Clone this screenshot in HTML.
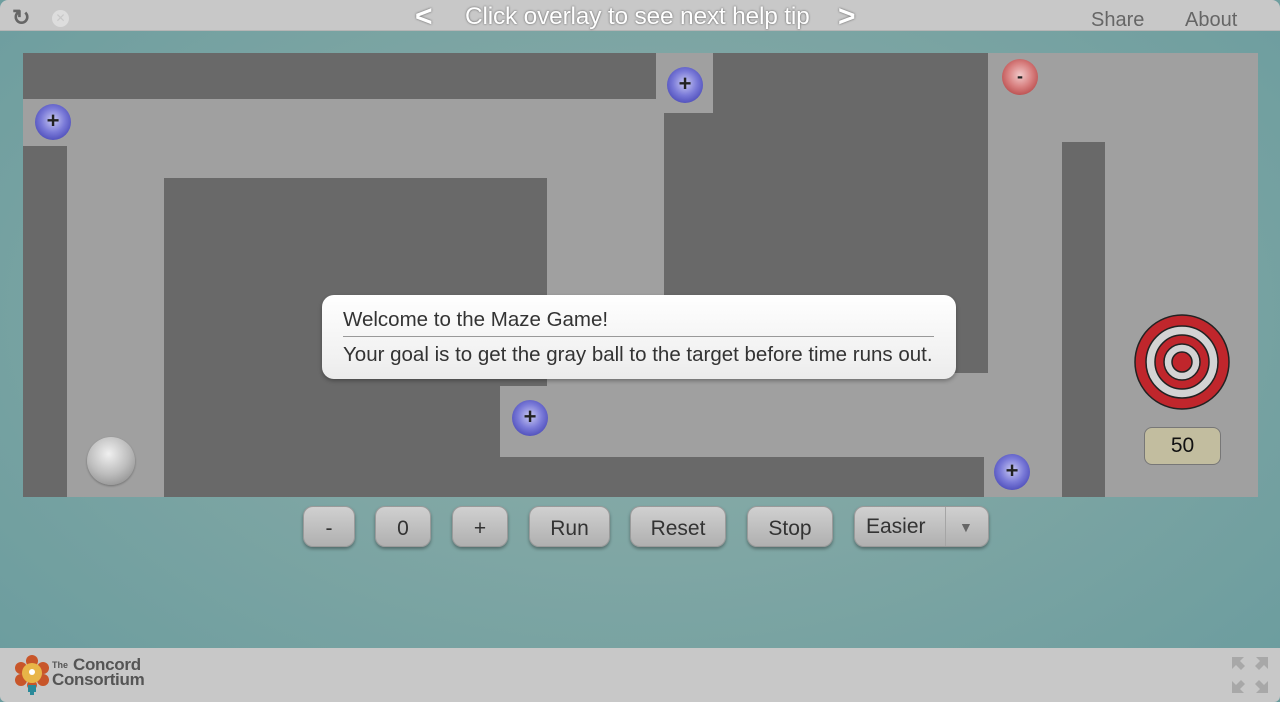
<!DOCTYPE html>
<html><head><meta charset="utf-8"><style>
*{margin:0;padding:0;box-sizing:border-box}
body{width:1280px;height:702px;overflow:hidden;font-family:"Liberation Sans",sans-serif;background:radial-gradient(ellipse at 50% 45%,#8cafaa 0%,#7fa6a4 45%,#6a9c9e 100%);position:relative}
.top{position:absolute;left:0;top:0;width:1280px;height:31px;background:#c8c8c8;border-radius:8px 8px 0 0;border-bottom:1px solid #b5b5b5}
.foot{position:absolute;left:0;top:648px;width:1280px;height:54px;background:#c8c8c8;border-radius:0 0 6px 6px}
.r{position:absolute}
.maze{position:absolute;left:23px;top:53px;width:1235px;height:444px;background:#a0a0a0;overflow:hidden}
.d{position:absolute;background:#696969}
.ball{position:absolute;width:36px;height:36px;border-radius:50%;background:radial-gradient(circle at 50% 45%,#c9c9f2 0%,#7a7ad8 45%,#4b4bb8 80%,#6a6acc 100%);color:#222;font:bold 22px/34px "Liberation Sans",sans-serif;text-align:center}
.red{background:radial-gradient(circle at 50% 45%,#f1c9c9 0%,#d88080 45%,#b84b4b 80%,#cc6a6a 100%)}
.btn{position:absolute;top:506px;height:41px;border-radius:10px;background:linear-gradient(#d0d0d0,#b0b0b0);box-shadow:0 2px 3px rgba(0,0,0,.35);border:1px solid #9a9a9a;font-size:21px;color:#333;text-align:center;line-height:44px}
</style></head><body>
<div class="top">
 <div class="r" style="left:12px;top:5px;font-size:22px;color:#666;font-weight:bold">&#x21bb;</div>
 <div class="r" style="left:52px;top:10px;width:17px;height:17px;border-radius:50%;background:#ddd;color:#c8c8c8;font-size:12px;line-height:17px;text-align:center">&#x2715;</div>
 <div class="r" style="left:415px;top:0px;font-size:30px;color:#fff;text-shadow:0 0 2px #555;font-weight:bold">&lt;</div>
 <div class="r" style="left:465px;top:3px;font-size:24.5px;color:#fff;text-shadow:0 0 2px #555;letter-spacing:-0.2px;white-space:nowrap">Click overlay to see next help tip</div>
 <div class="r" style="left:838px;top:0px;font-size:30px;color:#fff;text-shadow:0 0 2px #555;font-weight:bold">&gt;</div>
 <div class="r" style="left:1091px;top:9px;font-size:20px;color:#666">Share</div>
 <div class="r" style="left:1185px;top:9px;font-size:20px;color:#666">About</div>
</div>
<div class="maze">
 <div class="d" style="left:0;top:0;width:633px;height:46px"></div>
 <div class="d" style="left:0;top:93px;width:44px;height:351px"></div>
 <div class="d" style="left:141px;top:125px;width:383px;height:208px"></div>
 <div class="d" style="left:141px;top:333px;width:336px;height:111px"></div>
 <div class="d" style="left:477px;top:404px;width:484px;height:40px"></div>
 <div class="d" style="left:641px;top:60px;width:50px;height:260px"></div>
 <div class="d" style="left:690px;top:0;width:275px;height:320px"></div>
 <div class="d" style="left:1039px;top:89px;width:43px;height:355px"></div>
</div>
<div class="ball" style="left:667px;top:67px">+</div>
<div class="ball" style="left:35px;top:104px">+</div>
<div class="ball" style="left:512px;top:400px">+</div>
<div class="ball" style="left:994px;top:454px">+</div>
<div class="ball red" style="left:1002px;top:59px;font-size:18px">-</div>
<div class="r" style="left:87px;top:437px;width:48px;height:48px;border-radius:50%;background:radial-gradient(circle at 45% 35%,#f0f0f0 0%,#bdbdbd 50%,#8a8a8a 90%);box-shadow:0 1px 2px rgba(0,0,0,.3)"></div>
<svg class="r" style="left:1133px;top:313px" width="98" height="98" viewBox="0 0 98 98">
 <circle cx="49" cy="49" r="47" fill="#c0262c" stroke="#222" stroke-width="1.5"/>
 <circle cx="49" cy="49" r="36" fill="#d3d3d3" stroke="#222" stroke-width="1.5"/>
 <circle cx="49" cy="49" r="27" fill="#c0262c" stroke="#222" stroke-width="1.5"/>
 <circle cx="49" cy="49" r="18" fill="#d3d3d3" stroke="#222" stroke-width="1.5"/>
 <circle cx="49" cy="49" r="10" fill="#c0262c" stroke="#222" stroke-width="1.5"/>
</svg>
<div class="r" style="left:1144px;top:427px;width:77px;height:38px;border-radius:8px;background:#c2bd9f;border:1px solid #777;font-size:21px;line-height:36px;text-align:center;color:#111">50</div>
<div class="r" style="left:322px;top:295px;width:634px;height:84px;border-radius:12px;background:linear-gradient(#fff,#ececec);box-shadow:0 2px 4px rgba(0,0,0,.3)">
 <div class="r" style="left:21px;top:13px;font-size:20.5px;color:#333">Welcome to the Maze Game!</div>
 <div class="r" style="left:21px;top:41px;width:591px;height:1px;background:#999"></div>
 <div class="r" style="left:21px;top:48px;font-size:20.5px;color:#333;letter-spacing:0;white-space:nowrap">Your goal is to get the gray ball to the target before time runs out.</div>
</div>
<div class="btn" style="left:303px;width:52px">-</div>
<div class="btn" style="left:375px;width:56px">0</div>
<div class="btn" style="left:452px;width:56px">+</div>
<div class="btn" style="left:529px;width:81px">Run</div>
<div class="btn" style="left:630px;width:96px">Reset</div>
<div class="btn" style="left:747px;width:86px">Stop</div>
<div class="btn" style="left:854px;width:135px;text-align:left;padding-left:11px;line-height:40px">Easier<span class="r" style="left:90px;top:0;width:1px;height:39px;background:#a5a5a5"></span><span class="r" style="left:104px;top:0;font-size:14px;color:#666">&#9660;</span></div>
<div class="foot">
 <svg class="r" style="left:12px;top:5px" width="40" height="44" viewBox="0 0 40 44">
  <g fill="#c8562a"><circle cx="20" cy="8" r="6"/><circle cx="31" cy="15" r="6"/><circle cx="31" cy="27" r="6"/><circle cx="9" cy="15" r="6"/><circle cx="9" cy="27" r="6"/><circle cx="20" cy="32" r="5"/></g>
  <circle cx="20" cy="20" r="10" fill="#e8b548"/><circle cx="20" cy="19" r="3" fill="#fff"/>
  <rect x="16" y="32" width="8" height="7" fill="#2a8a9a"/><rect x="18" y="39" width="4" height="3" fill="#2a8a9a"/>
 </svg>
 <div class="r" style="left:52px;top:12px;font-size:9px;color:#555;font-weight:bold">The</div>
 <div class="r" style="left:73px;top:7px;font-size:17px;color:#555;font-weight:bold;letter-spacing:-0.3px">Concord</div>
 <div class="r" style="left:52px;top:22px;font-size:17px;color:#555;font-weight:bold;letter-spacing:-0.3px">Consortium</div>
 <svg class="r" style="left:1230px;top:7px" width="40" height="40" viewBox="0 0 40 40" fill="#a8a8a8">
  <path d="M2 2h12l-4 4 5 5-4 4-5-5-4 4z"/><path d="M38 2v12l-4-4-5 5-4-4 5-5-4-4z"/>
  <path d="M2 38v-12l4 4 5-5 4 4-5 5 4 4z"/><path d="M38 38h-12l4-4-5-5 4-4 5 5 4-4z"/>
 </svg>
</div>
</body></html>
